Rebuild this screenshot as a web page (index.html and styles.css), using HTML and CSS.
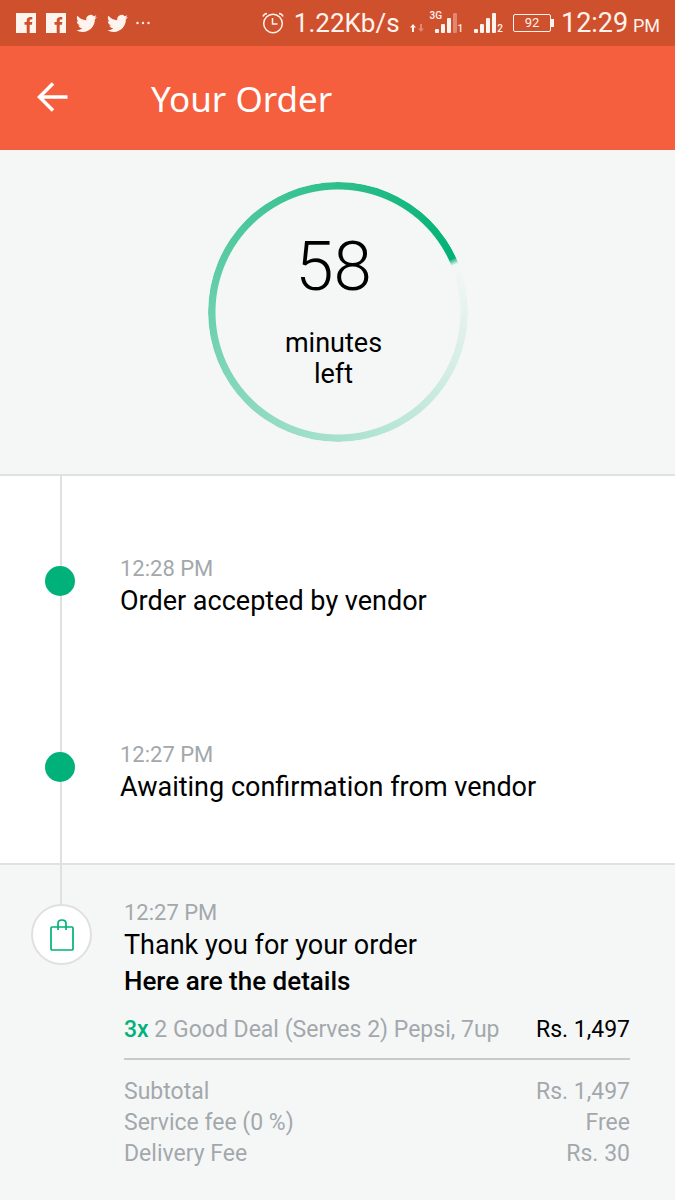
FILE: index.html
```html
<!DOCTYPE html>
<html lang="en">
<head>
    <meta charset="UTF-8">
    <meta name="viewport" content="width=device-width, initial-scale=1">
    <title>Your Order</title>
    <link rel="stylesheet" href="styles.css">
</head>

<body>
<svg width="0" height="0" class="sprite" aria-hidden="true">
    <symbol id="facebook" viewBox="0 0 20 20">
        <path d="M0 0h20v20h-6.300v-8.300h2.200l.4-2.800h-2.600V7.700c0-.8.3-1.200 1.200-1.200h1.400V4c-.5-.1-1.100-.1-1.800-.1-2.300 0-3.800 1.300-3.800 3.600v1.400H8.500v2.800h2.200V20H0z"/>
    </symbol>
    <symbol id="twitter" viewBox="0 2 24 20">
        <path d="M23.950 4.570a10 10 0 0 1-2.820.77 4.960 4.960 0 0 0 2.160-2.720c-.95.55-2 .95-3.130 1.180a4.920 4.920 0 0 0-8.380 4.480C7.690 8.100 4.070 6.130 1.640 3.160a4.820 4.820 0 0 0-.67 2.480c0 1.710.87 3.210 2.190 4.100a4.900 4.900 0 0 1-2.230-.62v.06a4.920 4.920 0 0 0 3.950 4.830 5 5 0 0 1-2.210.08 4.940 4.940 0 0 0 4.600 3.420A9.870 9.870 0 0 1 0 19.540a13.990 13.990 0 0 0 7.550 2.210c9.050 0 14-7.500 14-13.980 0-.21 0-.42-.02-.63a9.940 9.940 0 0 0 2.460-2.550z"/>
    </symbol>
</svg>

<div class="status-bar">
    <div class="notifications">
        <svg width="20" height="20"><use href="#facebook"/></svg>
        <svg width="20" height="20"><use href="#facebook"/></svg>
        <svg width="21" height="19"><use href="#twitter"/></svg>
        <svg width="21" height="19"><use href="#twitter"/></svg>
        <svg class="more" width="14" height="4" viewBox="0 0 14 4">
            <circle cx="1.500" cy="2" r="1.200"/>
            <circle cx="7" cy="2" r="1.200"/>
            <circle cx="12.500" cy="2" r="1.200"/>
        </svg>
    </div>
    <div class="system">
        <svg class="alarm" width="22" height="22" viewBox="0 0 22 22">
            <circle cx="11" cy="11.500" r="9.300"/>
            <path d="M10.500 6v6h5M1 4.500Q2 1.800 5 1.500M17 1.500q3 .3 4 3"/>
        </svg>
        <span class="speed">1.22Kb/s</span>
        <svg class="arrows" width="14" height="10" viewBox="0 0 14 10">
            <path d="M3 1L0 4.500h2V9h2V4.500h2z"/>
            <path class="dim" d="M11 9L8 5.500h2V1h2v4.500h2z"/>
        </svg>
        <div class="signal">
            <span class="network">3G</span>
            <svg width="24" height="22" viewBox="0 0 24 22">
                <rect x="1" y="17" width="4" height="4" rx="1"/>
                <rect x="7" y="12" width="4" height="9" rx="1"/>
                <rect x="13" y="6" width="4" height="15" rx="1"/>
                <rect class="dim" x="19" y="1" width="4" height="20" rx="1"/>
            </svg>
            <small>1</small>
        </div>
        <div class="signal">
            <svg width="24" height="22" viewBox="0 0 24 22">
                <rect x="1" y="17" width="4" height="4" rx="1"/>
                <rect x="7" y="12" width="4" height="9" rx="1"/>
                <rect x="13" y="6" width="4" height="15" rx="1"/>
                <rect x="19" y="1" width="4" height="20" rx="1"/>
            </svg>
            <small>2</small>
        </div>
        <span class="battery">92</span>
        <span class="clock">12:29 <small>PM</small></span>
    </div>
</div>

<header>
    <button class="back" aria-label="Back">
        <svg width="32" height="30" viewBox="0 0 32 30">
            <path d="M17 1.500L3.500 15 17 28.500M3.500 15h28"/>
        </svg>
    </button>
    <h1>Your Order</h1>
</header>

<main>
    <section class="countdown">
        <div class="ring">
            <span class="number">58</span>
            <span class="unit">minutes<br>left</span>
        </div>
    </section>

    <ol class="timeline">
        <li>
            <span class="dot"></span>
            <div>
                <time>12:28 PM</time>
                <p>Order accepted by vendor</p>
            </div>
        </li>
        <li>
            <span class="dot"></span>
            <div>
                <time>12:27 PM</time>
                <p>Awaiting confirmation from vendor</p>
            </div>
        </li>
    </ol>

    <section class="details">
        <span class="badge">
            <svg width="24" height="32" viewBox="0 0 24 32">
                <rect x="1" y="8" width="22" height="23" rx="1"/>
                <path d="M8 11V4.500Q8 1 12 1t4 3.500V11"/>
            </svg>
        </span>
        <div class="summary">
            <time>12:27 PM</time>
            <p>Thank you for your order</p>
            <h2>Here are the details</h2>
            <div class="item">
                <span><b>3x</b> 2 Good Deal (Serves 2) Pepsi, 7up</span>
                <span class="price">Rs. 1,497</span>
            </div>
            <table>
                <tr><th scope="row">Subtotal</th><td>Rs. 1,497</td></tr>
                <tr><th scope="row">Service fee (0 %)</th><td>Free</td></tr>
                <tr><th scope="row">Delivery Fee</th><td>Rs. 30</td></tr>
            </table>
        </div>
    </section>
</main>
</body>
</html>
```

FILE: styles.css
```css
* {
    box-sizing: border-box;
    padding: 0;
    margin: 0;
}

body {
    display: flex;
    flex-direction: column;
    min-height: 100vh;
    background-color: #f5f7f7;
    color: black;
    font-family: Roboto, "Liberation Sans", sans-serif;
    font-size: 27px;
}

.sprite {
    position: absolute;
}

/* status bar */
.status-bar {
    display: flex;
    justify-content: space-between;
    align-items: center;
    height: 46px;
    padding: 0 15px 0 16px;
    background-color: #cf502d;
    color: #fff3ee;
    fill: #fff3ee;
}

.notifications,
.system {
    display: flex;
    align-items: center;
    gap: 10px;
}

.more {
    margin-left: -2px;
}

.alarm {
    fill: none;
    stroke: #fff3ee;
    stroke-width: 1.5;
}

.dim {
    opacity: 0.35;
}

.speed {
    font-size: 26px;
}

.arrows {
    margin-top: 10px;
}

.signal {
    position: relative;
    display: flex;
    align-items: flex-end;
}

.signal small {
    font-size: 10px;
    font-weight: 500;
    line-height: 10px;
}

.network {
    position: absolute;
    top: -2px;
    left: -4px;
    font-size: 10px;
    font-weight: 500;
    line-height: 12px;
}

.battery {
    position: relative;
    width: 38px;
    height: 18px;
    border: 1px solid #fff3ee;
    border-radius: 2px;
    font-size: 13px;
    line-height: 16px;
    text-align: center;
}

.battery::after {
    content: "";
    position: absolute;
    top: 4px;
    right: -4px;
    width: 3px;
    height: 8px;
    background-color: #fff3ee;
}

.clock {
    font-size: 27px;
}

.clock small {
    margin-left: -2px;
    font-size: 18px;
}

/* title bar */
header {
    display: flex;
    align-items: center;
    height: 104px;
    padding: 0 36px;
    background-color: #f65f3e;
    color: white;
}

.back {
    display: flex;
    width: 115px;
    padding-bottom: 2px;
    border: none;
    background: none;
    cursor: pointer;
}

.back svg {
    fill: none;
    stroke: white;
    stroke-width: 3.5;
}

h1 {
    font-family: "Noto Sans", sans-serif;
    font-size: 35px;
    font-weight: normal;
}

/* countdown */
.countdown {
    display: flex;
    justify-content: center;
    padding: 32px 0;
    border-bottom: 2px solid #e0e1e1;
}

.ring {
    position: relative;
    display: flex;
    flex-direction: column;
    align-items: center;
    width: 260px;
    height: 260px;
    padding: 45px 8px 0 0;
    text-align: center;
}

.ring::before {
    content: "";
    position: absolute;
    inset: 0;
    border-radius: 50%;
    background: conic-gradient(from 68deg, rgba(0, 178, 116, 0), rgb(0, 178, 116) 357deg, rgba(0, 178, 116, 0));
    mask: radial-gradient(closest-side, transparent 122px, black 123px);
}

.number {
    font-size: 69px;
    font-weight: 300;
    line-height: 80px;
}

.unit {
    margin-top: 21px;
    line-height: 31px;
}

/* timeline */
.timeline {
    padding: 79px 45px 58px;
    border-bottom: 2px solid #e0e1e1;
    background: linear-gradient(#e0e0e0, #e0e0e0) 60px 0 / 2px 100% no-repeat white;
    list-style: none;
}

.timeline li {
    display: flex;
    align-items: flex-start;
    gap: 45px;
}

.timeline li + li {
    margin-top: 122px;
}

.dot {
    width: 30px;
    height: 30px;
    margin-top: 11px;
    border-radius: 50%;
    background-color: #00b279;
}

time {
    display: block;
    color: #a3a8ac;
    font-size: 22px;
    line-height: 28px;
}

p {
    line-height: 36px;
}

/* order details */
.details {
    display: flex;
    align-items: flex-start;
    gap: 32px;
    padding: 34px 45px 32px 31px;
    background: linear-gradient(#e0e0e0, #e0e0e0) 60px 0 / 2px 40px no-repeat;
}

.badge {
    display: flex;
    flex-shrink: 0;
    align-items: center;
    justify-content: center;
    width: 61px;
    height: 61px;
    margin-top: 5px;
    border: 2px solid #e0e0e0;
    border-radius: 50%;
    background-color: white;
}

.badge svg {
    fill: none;
    stroke: #00b279;
    stroke-width: 1.7;
}

.summary {
    flex: 1;
}

h2 {
    font-size: 26px;
    font-weight: 500;
    line-height: 36px;
}

.item {
    display: flex;
    justify-content: space-between;
    padding: 16px 0 13px;
    border-bottom: 2px solid #c8caca;
    color: #a3a8ac;
    font-size: 23px;
    line-height: 30px;
}

.item b {
    color: #00b279;
    font-weight: 500;
}

.price {
    color: black;
}

table {
    width: 100%;
    margin-top: 16px;
    border-collapse: collapse;
    color: #a3a8ac;
    font-size: 23px;
    line-height: 31px;
}

th {
    font-weight: normal;
    text-align: left;
}

td {
    text-align: right;
}
```
